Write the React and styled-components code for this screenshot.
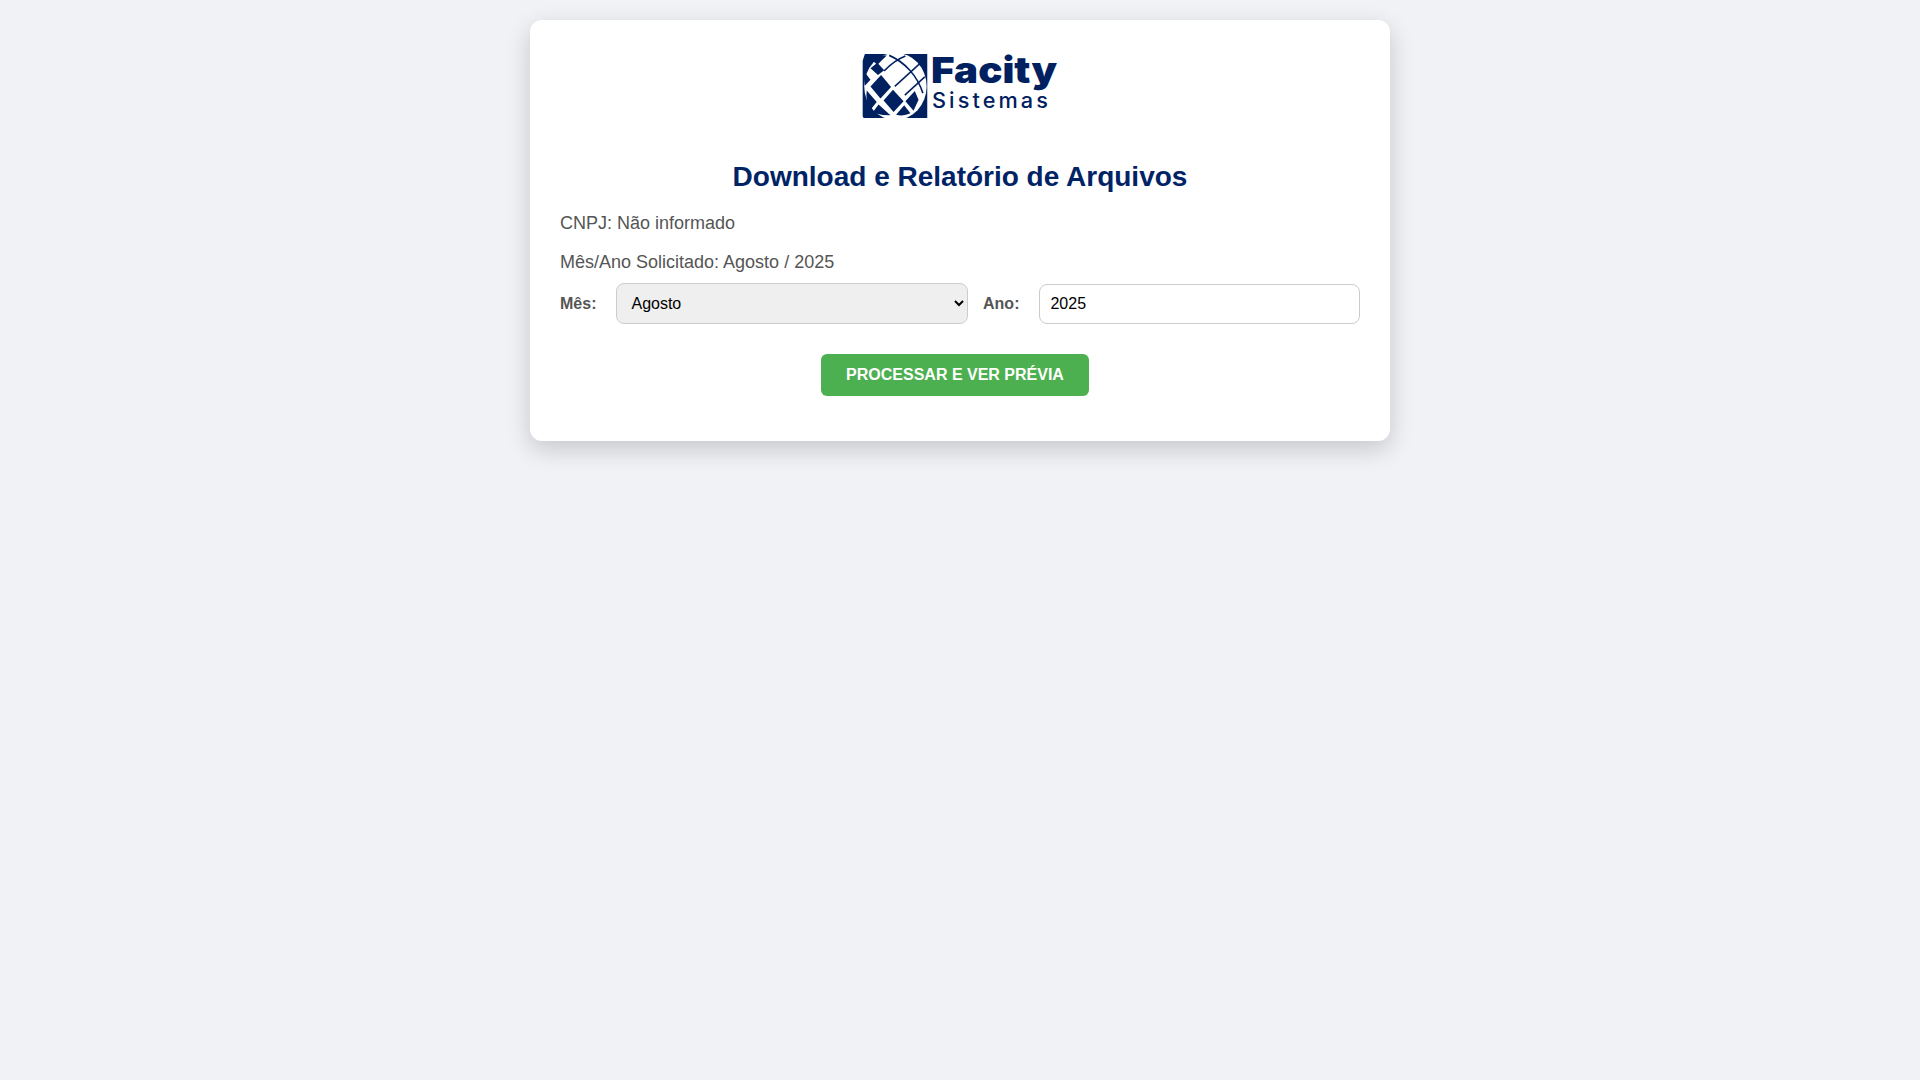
import React from "react";
import styled, { createGlobalStyle } from "styled-components";

const Global = createGlobalStyle`
  html, body { margin: 0; padding: 0; }
  body {
    background: #f0f2f5;
    font-family: "Liberation Sans", Arial, sans-serif;
    min-height: 1080px;
  }
`;

const Card = styled.main`
  box-sizing: border-box;
  width: 860px;
  margin: 20px auto;
  padding: 30px;
  background: #fff;
  border-radius: 12px;
  box-shadow: 0 8px 24px rgba(0, 0, 0, 0.18);
`;

const LogoWrap = styled.div`
  display: flex;
  justify-content: center;
  height: 86px;
  margin-top: -6px;
  margin-bottom: 31px;
`;

const Title = styled.h2`
  margin: 0 0 20px;
  text-align: center;
  font-size: 28px;
  line-height: 32px;
  font-weight: 700;
  color: #002366;
`;

const Info = styled.p`
  margin: 0 0 18px;
  font-size: 18px;
  line-height: 21px;
  color: #555;
`;

const FormRow = styled.form`
  display: flex;
  align-items: center;
  gap: 15px;
  margin-top: -8px;
`;

const Label = styled.label`
  font-size: 16px;
  font-weight: 700;
  color: #555;
  white-space: nowrap;
  margin-right: 5px;
`;

const Select = styled.select`
  box-sizing: border-box;
  flex: 352.6 1 0;
  min-width: 0;
  height: 41px;
  padding: 8px 10px;
  border: 1px solid #ccc;
  border-radius: 8px;
  background: #efefef;
  color: #000;
  font: 16px "Liberation Sans", Arial, sans-serif;
`;

const Input = styled.input`
  box-sizing: border-box;
  flex: 319.4 1 0;
  min-width: 0;
  height: 40px;
  padding: 8px 10px;
  border: 1px solid #ccc;
  border-radius: 8px;
  background: #fff;
  color: #000;
  font: 16px "Liberation Sans", Arial, sans-serif;
`;

const Actions = styled.div`
  display: flex;
  justify-content: center;
  padding-right: 10px;
  margin-top: 30px;
  margin-bottom: 15px;
`;

const Button = styled.button`
  height: 42px;
  padding: 0 25px;
  border: none;
  border-radius: 6px;
  background: #4caf50;
  color: #fff;
  font: 700 16px "Liberation Sans", Arial, sans-serif;
  cursor: pointer;
`;

const Logo = () => (
  <svg width="198" height="86" viewBox="0 -6 198 86" aria-label="Facity Sistemas">
    <g transform="translate(-3 -2.7) scale(0.312 0.337)">
      <path d="M22 20 H222 V210 H20 Q15 210 15 204 V40 Z" fill="#002060" />
      <circle cx="120" cy="116" r="100" fill="#fff" />
      <path d="M22 20 L62 52 L92 24 Z" fill="#002060" />
      <g fill="none" stroke="#002060" strokeWidth="5">
        <path d="M84 70 C105 50 125 36 152 26" />
        <path d="M100 24 C150 44 190 84 208 136" />
        <path d="M118 116 L206 42" />
        <path d="M150 142 L214 88" />
      </g>
      <g fill="#002060">
        <path d="M40 62 L62 46 L84 68 L64 82 Z" />
        <path d="M40 116 L74 82 L106 118 L72 152 Z" />
        <path d="M82 158 L112 126 L146 160 L114 192 Z" />
        <path d="M28 128 L60 162 L36 190 Q24 160 28 128 Z" />
        <path d="M66 170 L104 202 Q76 202 46 194 Z" />
        <path d="M152 160 L182 130 L194 156 L178 188 Z" />
        <path d="M122 200 L148 172 L168 196 Q146 206 122 200 Z" />
        <path d="M20 72 L40 96 L22 114 Q18 92 20 72 Z" />
      </g>
    </g>
    <text x="70" y="33" textLength="126" lengthAdjust="spacingAndGlyphs" fontFamily="Inter, 'Open Sans', sans-serif" fontWeight="900" fontSize="36" fill="#002060">Facity</text>
    <text x="71" y="58" textLength="119" lengthAdjust="spacingAndGlyphs" letterSpacing="3" fontFamily="Inter, 'Open Sans', sans-serif" fontWeight="500" fontSize="21" fill="#002060">Sistemas</text>
  </svg>
);

export default function App() {
  return (
    <>
      <Global />
      <Card>
        <LogoWrap><Logo /></LogoWrap>
        <Title>Download e Relatório de Arquivos</Title>
        <Info>CNPJ: Não informado</Info>
        <Info>Mês/Ano Solicitado: Agosto / 2025</Info>
        <FormRow>
          <Label htmlFor="mes">Mês:</Label>
          <Select id="mes" defaultValue="8">
            <option value="8">Agosto</option>
          </Select>
          <Label htmlFor="ano">Ano:</Label>
          <Input id="ano" type="number" defaultValue="2025" />
        </FormRow>
        <Actions><Button type="button">PROCESSAR E VER PRÉVIA</Button></Actions>
      </Card>
    </>
  );
}
